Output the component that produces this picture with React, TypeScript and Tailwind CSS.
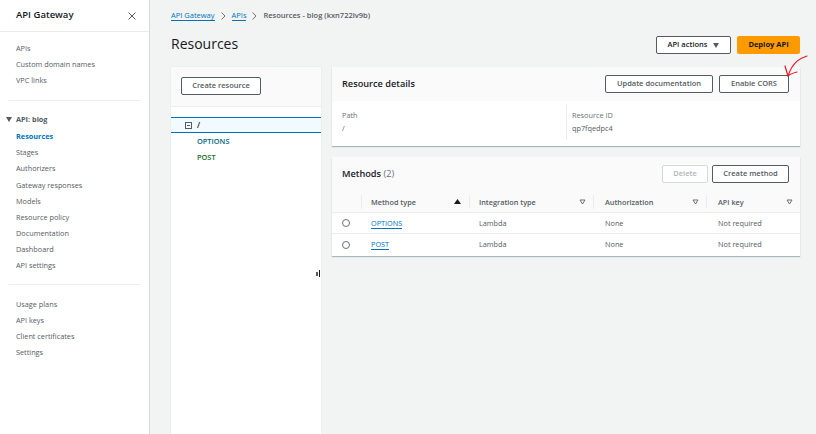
import React from "react";

const F = "[font-family:'Open_Sans',sans-serif]";

function NavLink({ children, active }: { children: React.ReactNode; active?: boolean }) {
  return (
    <div className={`h-[16.1px] pl-4 text-[7.3px] leading-[16px] ${active ? "font-bold text-[#0073bb]" : "text-[#545b64]"}`}>
      {children}
    </div>
  );
}

function Btn({ children, className = "" }: { children: React.ReactNode; className?: string }) {
  return (
    <div className={`flex h-[18px] items-center justify-center rounded-[2px] border border-[#545b64] bg-white text-[7.500px] font-semibold text-[#545b64] ${className}`}>
      {children}
    </div>
  );
}

function Filter() {
  return (
    <svg width="7" height="6" viewBox="0 0 7 6" className="shrink-0">
      <path d="M1 1h5L3.5 5z" fill="none" stroke="#687078" strokeWidth="1" />
    </svg>
  );
}

const cols = "grid grid-cols-[29px_108px_124px_113px_94px]";

function HeaderCell({ children, icon }: { children: React.ReactNode; icon: React.ReactNode }) {
  return (
    <div className="flex h-[14px] items-center justify-between pr-[7px] pl-[9px]">
      <span className="pt-[1px]">{children}</span>
      {icon}
    </div>
  );
}

function Row({ name, border }: { name: string; border?: boolean }) {
  return (
    <div className={`${cols} h-[21px] items-center text-[7.300px] text-[#545b64] ${border ? "border-b border-[#eaeded]" : ""}`}>
      <div className="flex justify-center pr-[1px]">
        <span className="h-[8px] w-[8px] rounded-full border border-[#687078] bg-white" />
      </div>
      <div className="pl-[10px]">
        <span className="border-b border-[#0073bb] text-[#0073bb]">{name}</span>
      </div>
      <div className="pl-[10px]">Lambda</div>
      <div className="pl-[12px]">None</div>
      <div className="pl-[12px]">Not required</div>
    </div>
  );
}

export default function App() {
  return (
    <div className={`relative flex h-[434px] w-[816px] overflow-hidden bg-[#f2f3f3] text-[#16191f] ${F}`}>
      <aside className="h-full w-[150px] shrink-0 border-r border-[#d5dbdb] bg-white">
        <div className="flex h-[32px] items-center justify-between border-b border-[#eaeded] pr-[13px] pl-4">
          <span className="text-[9.500px] font-semibold text-[#16191f]">API Gateway</span>
          <svg width="8" height="8" viewBox="0 0 8 8">
            <path d="M.5.5l7 7M7.5.5l-7 7" stroke="#545b64" strokeWidth="1" fill="none" />
          </svg>
        </div>
        <div className="pt-[8px]">
          <NavLink>APIs</NavLink>
          <NavLink>Custom domain names</NavLink>
          <NavLink>VPC links</NavLink>
        </div>
        <div className="mx-[9px] mt-[12px] h-px bg-[#eaeded]" />
        <div className="relative mt-[10px] h-[17px] pl-4 text-[7.300px] font-bold leading-[16px] text-[#545b64]">
          <svg width="6" height="5" viewBox="0 0 6 5" className="absolute top-[6px] left-[6px]">
            <path d="M0 0h6L3 5z" fill="#545b64" />
          </svg>
          API: blog
        </div>
        <NavLink active>Resources</NavLink>
        <NavLink>Stages</NavLink>
        <NavLink>Authorizers</NavLink>
        <NavLink>Gateway responses</NavLink>
        <NavLink>Models</NavLink>
        <NavLink>Resource policy</NavLink>
        <NavLink>Documentation</NavLink>
        <NavLink>Dashboard</NavLink>
        <NavLink>API settings</NavLink>
        <div className="mx-[9px] mt-[11px] h-px bg-[#eaeded]" />
        <div className="pt-[10.500px]">
          <NavLink>Usage plans</NavLink>
          <NavLink>API keys</NavLink>
          <NavLink>Client certificates</NavLink>
          <NavLink>Settings</NavLink>
        </div>
      </aside>

      <main className="flex min-w-0 flex-1 flex-col pr-[16px] pl-[21px]">
        <div className="flex h-[31px] items-center text-[7.500px] text-[#545b64]">
          <span className="border-b border-[#0073bb] leading-[10px] text-[#0073bb]">API Gateway</span>
          <svg width="5" height="8" viewBox="0 0 5 8" className="mx-[6px]"><path d="M.5.5L4 4 .5 7.500" stroke="#687078" fill="none" /></svg>
          <span className="border-b border-[#0073bb] leading-[10px] text-[#0073bb]">APIs</span>
          <svg width="5" height="8" viewBox="0 0 5 8" className="mx-[6px]"><path d="M.5.5L4 4 .5 7.500" stroke="#687078" fill="none" /></svg>
          <span className="font-semibold">Resources - blog (kxn722lv9b)</span>
        </div>
        <div className="flex h-[36px] items-start justify-between pt-[5px]">
          <h1 className="-mt-[4px] text-[14px] leading-[24px] font-normal text-[#16191f]">Resources</h1>
          <div className="flex gap-[6px]">
            <Btn className="w-[75px] gap-[6px] text-[#16191f]">
              API actions
              <svg width="6" height="5" viewBox="0 0 6 5"><path d="M0 0h6L3 5z" fill="#545b64" /></svg>
            </Btn>
            <div className="flex h-[18px] w-[63px] items-center justify-center rounded-[2px] bg-[#ff9900] text-[7.500px] font-bold text-[#16191f]">
              Deploy API
            </div>
          </div>
        </div>

        <div className="flex min-h-0 flex-1 gap-[11px]">
          <section className="w-[150px] shrink-0 bg-white shadow-[0_0_1px_#d5dbdb]">
            <div className="h-[40px] border-b border-[#eaeded] bg-[#fafafa] px-[10px] pt-[10px]">
              <Btn className="w-[80px]">Create resource</Btn>
            </div>
            <div className="pt-[10px]">
              <div className="flex h-[16px] items-center gap-[3px] border-y border-[#0073bb] bg-[#f1faff] pl-[14px] text-[8px] font-semibold">
                <span className="flex h-[7px] w-[7px] items-center justify-center border border-[#545b64]">
                  <span className="h-px w-[3px] bg-[#545b64]" />
                </span>
                <span className="ml-[2px]">/</span>
              </div>
              <div className="h-[16px] pl-[26px] text-[7.400px] leading-[16px] font-semibold text-[#00687d]">OPTIONS</div>
              <div className="h-[16px] pl-[26px] text-[7.400px] leading-[16px] font-semibold text-[#1d6b2e]">POST</div>
            </div>
          </section>

          <div className="flex min-w-0 flex-1 flex-col gap-[11px]">
            <section className="h-[79px] overflow-hidden bg-white shadow-[0_1px_1px_#aab7b8]">
              <div className="flex h-[34px] items-center justify-between bg-[#fafafa] pr-[11px] pl-[10px]">
                <h2 className="text-[9.200px] font-semibold">Resource details</h2>
                <div className="flex gap-[6px]">
                  <Btn className="w-[108px]">Update documentation</Btn>
                  <Btn className="w-[70px]">Enable CORS</Btn>
                </div>
              </div>
              <div className="flex pt-[8px] text-[7.300px] leading-[13px]">
                <div className="w-[234px] pl-[10px]">
                  <div className="text-[#687078]">Path</div>
                  <div className="text-[#545b64]">/</div>
                </div>
                <div className="h-[35px] -translate-y-[4px] border-l border-[#eaeded] pt-[4px] pl-[5px]">
                  <div className="text-[#687078]">Resource ID</div>
                  <div className="text-[#545b64]">qp7fqedpc4</div>
                </div>
              </div>
            </section>

            <section className="h-[99px] overflow-hidden bg-white shadow-[0_1px_1px_#aab7b8]">
              <div className="flex h-[34px] items-center justify-between bg-[#fafafa] pr-[11px] pl-[10px]">
                <h2 className="text-[9.200px] font-semibold">
                  Methods <span className="font-normal text-[#687078]">(2)</span>
                </h2>
                <div className="flex gap-[4px]">
                  <div className="flex h-[18px] w-[46px] items-center justify-center rounded-[2px] border border-[#d5dbdb] bg-white text-[7.500px] font-semibold text-[#aab7b8]">
                    Delete
                  </div>
                  <Btn className="w-[77px]">Create method</Btn>
                </div>
              </div>
              <div className={`${cols} h-[22px] items-center border-b border-[#eaeded] bg-[#fafafa] text-[7.300px] font-semibold text-[#545b64] [&>*+*]:border-l [&>*+*]:border-[#eaeded]`}>
                <div />
                <HeaderCell icon={<svg width="7" height="5" viewBox="0 0 7 5" className="mr-[1px]"><path d="M3.500 0L7 5H0z" fill="#16191f" /></svg>}>Method type</HeaderCell>
                <HeaderCell icon={<Filter />}>Integration type</HeaderCell>
                <HeaderCell icon={<Filter />}>
                  <span className="ml-[2px]">Authorization</span>
                </HeaderCell>
                <HeaderCell icon={<Filter />}>
                  <span className="ml-[2px]">API key</span>
                </HeaderCell>
              </div>
              <Row name="OPTIONS" border />
              <Row name="POST" />
            </section>
          </div>
        </div>
      </main>

      <div className="absolute top-[270px] left-[316px] flex h-[7px] items-center gap-px">
        <span className="h-[4px] w-[1.500px] bg-[#545b64]" />
        <span className="h-[7px] w-[1px] bg-[#16191f]" />
      </div>
      <svg width="24" height="24" viewBox="0 0 24 24" className="absolute top-[55px] left-[784px]">
        <path d="M23 1C17 3 9 6 4 21M1 11c1 3 2 7 3 10C6 19 9 18 13 17" fill="none" stroke="#f0141e" strokeWidth="1.200" strokeLinecap="round" />
      </svg>
    </div>
  );
}
